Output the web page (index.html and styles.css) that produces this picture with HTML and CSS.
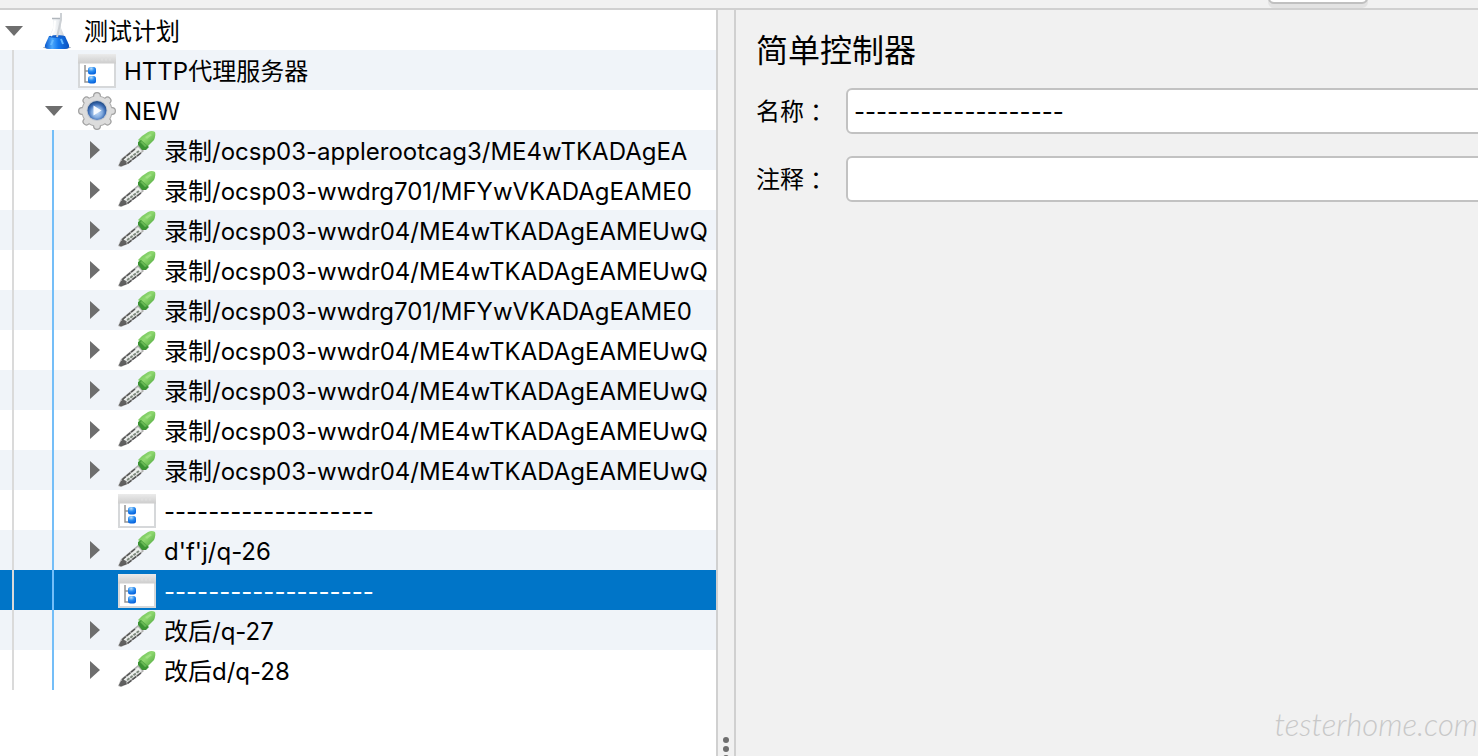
FILE: index.html
```html
<!DOCTYPE html>
<html lang="zh-CN">
<head>
  <meta charset="UTF-8">
  <title>测试计划</title>
  <link rel="stylesheet" href="styles.css">
</head>
<body>
  <!-- Icon sprite -->
  <svg class="sprite" aria-hidden="true">
    <defs>
      <linearGradient id="liquid" x1="0" x2="1" y1="0" y2="0">
        <stop offset="0" stop-color="#0a58cc"/>
        <stop offset=".3" stop-color="#4ca8fc"/>
        <stop offset=".55" stop-color="#1478ee"/>
        <stop offset="1" stop-color="#0a50bc"/>
      </linearGradient>
      <linearGradient id="glass" x1="0" x2="1" y1="0" y2="0">
        <stop offset="0" stop-color="#ccd2d8"/>
        <stop offset=".4" stop-color="#f6f8fa"/>
        <stop offset="1" stop-color="#b4bcc4"/>
      </linearGradient>
      <linearGradient id="titlebar" x1="0" x2="0" y1="0" y2="1">
        <stop offset="0" stop-color="#ebebeb"/>
        <stop offset="1" stop-color="#cdcdcd"/>
      </linearGradient>
      <radialGradient id="node" cx=".4" cy=".2" r=".8">
        <stop offset="0" stop-color="#b8defc"/>
        <stop offset=".5" stop-color="#2a8cf0"/>
        <stop offset="1" stop-color="#0460dc"/>
      </radialGradient>
      <radialGradient id="hub" cx=".5" cy=".6" r=".55">
        <stop offset="0" stop-color="#c4dcf8"/>
        <stop offset=".5" stop-color="#84acdf"/>
        <stop offset=".8" stop-color="#3c6cb4"/>
        <stop offset="1" stop-color="#24508c"/>
      </radialGradient>
      <linearGradient id="bulb" x1="0" x2="1" y1="0" y2="1">
        <stop offset="0" stop-color="#64b850"/>
        <stop offset=".45" stop-color="#8fd870"/>
        <stop offset="1" stop-color="#46a038"/>
      </linearGradient>
      <linearGradient id="shade" x1="0" x2="1" y1="0" y2="0">
        <stop offset="0" stop-color="#888" stop-opacity=".2"/>
        <stop offset=".3" stop-color="#888" stop-opacity=".6"/>
        <stop offset="1" stop-color="#888" stop-opacity="0"/>
      </linearGradient>
    </defs>

    <symbol id="icon-flask" viewBox="0 0 38 40">
      <ellipse cx="19" cy="37.500" rx="14" ry="1.500" fill="#7c8898" opacity=".7"/>
      <path d="M15 8h8v10l7 17q0 3-3 3H11q-3 0-3-3l7-17z" fill="url(#glass)" opacity=".85"/>
      <path d="M11 26h16l4 9q1 4-4 4H11q-5 0-4-4z" fill="url(#liquid)"/>
      <ellipse cx="19" cy="26.500" rx="8" ry="1.500" fill="#1460cc"/>
      <path d="M14 8.500h10" stroke="#b0b6bc" stroke-width="1.500"/>
      <path d="M23 3v7l-4 17" stroke="#ccd0d4" stroke-width="2" fill="none"/>
      <path d="M17 11l-1 9-3 6" stroke="#fff" stroke-width="2" fill="none"/>
      <path d="M15 30l-2 5M23 29l2 5" stroke="#64b8ff" stroke-width="2" fill="none"/>
    </symbol>

    <symbol id="icon-window" viewBox="0 0 38 40">
      <path d="M0 4h38v34H0z" fill="#d6d8da"/>
      <path d="M2 12h34v24H2z" fill="#fff"/>
      <path d="M0 4h38v9.500H0z" fill="url(#titlebar)"/>
      <path d="M23 9h2m2 0h2m2 0h2" stroke="#dedede" stroke-width="3"/>
      <path d="M7 15v17h4M7 21h4" stroke="#949494" stroke-width="1.500" fill="none"/>
      <rect x="10" y="17" width="8" height="7.500" rx="2.500" fill="url(#node)"/>
      <rect x="10" y="26" width="8" height="7.500" rx="2.500" fill="url(#node)"/>
    </symbol>

    <symbol id="icon-gear" viewBox="0 0 38 40">
      <g stroke-linecap="round">
        <path d="M19 6v30M4 21h30M8.500 10.500l21 21M29.500 10.500l-21 21" stroke="#a0a0a0" stroke-width="8"/>
        <circle cx="19" cy="21" r="15.500" fill="#acacac"/>
        <path d="M19 6v30M4 21h30M8.500 10.500l21 21M29.500 10.500l-21 21" stroke="#dcdcdc" stroke-width="5.500"/>
        <circle cx="19" cy="21" r="14.500" fill="#dcdcdc"/>
      </g>
      <circle cx="19" cy="20.500" r="10.500" fill="#c0c6d0"/>
      <circle cx="19" cy="20.500" r="9.500" fill="url(#hub)"/>
      <path d="M15.500 15.500l8 5-8 5z" fill="#f6faff"/>
    </symbol>

    <symbol id="icon-dropper" viewBox="0 0 38 40">
      <path d="M3 39h30" stroke="url(#shade)" stroke-width="2"/>
      <path d="M20 15l6 6-16 13-7 3-3-1 3-7z" fill="#b0b0b0"/>
      <path d="M20 17l4 4L8 33l-4 1 1-4z" fill="#eceeec"/>
      <path d="M21 21L8 31" stroke="#7c887c" stroke-width="2" stroke-dasharray="3 1"/>
      <path d="M17 19L5 29l-3 6M23 23L10 33l-6 2" stroke="#545454" stroke-width="1.500" fill="none" stroke-dasharray="5 1"/>
      <path d="M5 29l-4 6q1 2 3 1l5-4z" fill="#606060"/>
      <path d="M24 6l6-4q4-2 7 0 1 3-1 8l-7 7-9-7z" fill="url(#bulb)"/>
      <path d="M20 12l3-2 8 7-3 3q-2 0-4 0l-4-5z" fill="#3c9434"/>
      <path d="M22 12l2-1 5 5-2 1z" fill="#68b854"/>
      <path d="M27 7l5-3 2 1-5 4z" fill="#a8e48c" opacity=".7"/>
    </symbol>
  </svg>

  <div class="toolbar">
    <button type="button" class="toolbar-button" aria-label="工具"></button>
  </div>

  <div class="workspace">
    <nav class="tree" aria-label="测试计划">
      <div class="row">
        <button type="button" class="toggle open" aria-label="折叠"></button>
        <svg class="icon"><use href="#icon-flask"/></svg>
        <span class="label">测试计划</span>
      </div>
      <div class="row">
        <span class="guide"></span>
        <span class="toggle"></span>
        <svg class="icon"><use href="#icon-window"/></svg>
        <span class="label">HTTP代理服务器</span>
      </div>
      <div class="row">
        <span class="guide"></span>
        <button type="button" class="toggle open" aria-label="折叠"></button>
        <svg class="icon"><use href="#icon-gear"/></svg>
        <span class="label">NEW</span>
      </div>
      <div class="row">
        <span class="guide"></span>
        <span class="guide active"></span>
        <button type="button" class="toggle closed" aria-label="展开"></button>
        <svg class="icon"><use href="#icon-dropper"/></svg>
        <span class="label">录制/ocsp03-applerootcag3/ME4wTKADAgEA</span>
      </div>
      <div class="row">
        <span class="guide"></span>
        <span class="guide active"></span>
        <button type="button" class="toggle closed" aria-label="展开"></button>
        <svg class="icon"><use href="#icon-dropper"/></svg>
        <span class="label">录制/ocsp03-wwdrg701/MFYwVKADAgEAME0</span>
      </div>
      <div class="row">
        <span class="guide"></span>
        <span class="guide active"></span>
        <button type="button" class="toggle closed" aria-label="展开"></button>
        <svg class="icon"><use href="#icon-dropper"/></svg>
        <span class="label">录制/ocsp03-wwdr04/ME4wTKADAgEAMEUwQ</span>
      </div>
      <div class="row">
        <span class="guide"></span>
        <span class="guide active"></span>
        <button type="button" class="toggle closed" aria-label="展开"></button>
        <svg class="icon"><use href="#icon-dropper"/></svg>
        <span class="label">录制/ocsp03-wwdr04/ME4wTKADAgEAMEUwQ</span>
      </div>
      <div class="row">
        <span class="guide"></span>
        <span class="guide active"></span>
        <button type="button" class="toggle closed" aria-label="展开"></button>
        <svg class="icon"><use href="#icon-dropper"/></svg>
        <span class="label">录制/ocsp03-wwdrg701/MFYwVKADAgEAME0</span>
      </div>
      <div class="row">
        <span class="guide"></span>
        <span class="guide active"></span>
        <button type="button" class="toggle closed" aria-label="展开"></button>
        <svg class="icon"><use href="#icon-dropper"/></svg>
        <span class="label">录制/ocsp03-wwdr04/ME4wTKADAgEAMEUwQ</span>
      </div>
      <div class="row">
        <span class="guide"></span>
        <span class="guide active"></span>
        <button type="button" class="toggle closed" aria-label="展开"></button>
        <svg class="icon"><use href="#icon-dropper"/></svg>
        <span class="label">录制/ocsp03-wwdr04/ME4wTKADAgEAMEUwQ</span>
      </div>
      <div class="row">
        <span class="guide"></span>
        <span class="guide active"></span>
        <button type="button" class="toggle closed" aria-label="展开"></button>
        <svg class="icon"><use href="#icon-dropper"/></svg>
        <span class="label">录制/ocsp03-wwdr04/ME4wTKADAgEAMEUwQ</span>
      </div>
      <div class="row">
        <span class="guide"></span>
        <span class="guide active"></span>
        <button type="button" class="toggle closed" aria-label="展开"></button>
        <svg class="icon"><use href="#icon-dropper"/></svg>
        <span class="label">录制/ocsp03-wwdr04/ME4wTKADAgEAMEUwQ</span>
      </div>
      <div class="row">
        <span class="guide"></span>
        <span class="guide active"></span>
        <span class="toggle"></span>
        <svg class="icon"><use href="#icon-window"/></svg>
        <span class="label">-------------------</span>
      </div>
      <div class="row">
        <span class="guide"></span>
        <span class="guide active"></span>
        <button type="button" class="toggle closed" aria-label="展开"></button>
        <svg class="icon"><use href="#icon-dropper"/></svg>
        <span class="label">d'f'j/q-26</span>
      </div>
      <div class="row selected">
        <span class="guide"></span>
        <span class="guide active"></span>
        <span class="toggle"></span>
        <svg class="icon"><use href="#icon-window"/></svg>
        <span class="label">-------------------</span>
      </div>
      <div class="row">
        <span class="guide"></span>
        <span class="guide active"></span>
        <button type="button" class="toggle closed" aria-label="展开"></button>
        <svg class="icon"><use href="#icon-dropper"/></svg>
        <span class="label">改后/q-27</span>
      </div>
      <div class="row">
        <span class="guide"></span>
        <span class="guide active"></span>
        <button type="button" class="toggle closed" aria-label="展开"></button>
        <svg class="icon"><use href="#icon-dropper"/></svg>
        <span class="label">改后d/q-28</span>
      </div>
    </nav>

    <div class="splitter">
      <span class="dot"></span>
      <span class="dot"></span>
      <span class="dot"></span>
    </div>

    <main class="editor">
      <h1>简单控制器</h1>
      <form class="fields">
        <label for="name">名称<span class="colon">：</span></label>
        <input type="text" id="name" value="-------------------">
        <label for="comment">注释<span class="colon">：</span></label>
        <input type="text" id="comment">
      </form>
      <div class="watermark">testerhome.com</div>
    </main>
  </div>
</body>
</html>
```
FILE: styles.css
```css
* {
  box-sizing: border-box;
}
body {
  display: flex;
  flex-direction: column;
  height: 100vh;
  margin: 0;
  overflow: hidden;
  background: #f1f1f1;
  color: #000;
  font-family: Inter, "Noto Sans CJK SC", sans-serif;
  font-size: 24px;
}
.sprite {
  position: absolute;
  width: 0;
  height: 0;
}

/* Toolbar */
.toolbar {
  display: flex;
  flex: none;
  justify-content: flex-end;
  align-items: flex-end;
  height: 10px;
  padding: 0 110px 4px 0;
  border-bottom: 2px solid #d0d0d0;
  overflow: hidden;
}
.toolbar-button {
  flex: none;
  width: 100px;
  height: 40px;
  border: 2px solid #c0c0c0;
  border-radius: 6px;
  background: #fff;
  box-shadow: 0 4px 0 #e3e3e3;
}
.workspace {
  display: grid;
  grid-template-columns: 716fr 20px 742fr;
  flex: 1;
  min-height: 0;
}

/* Tree */
.tree {
  min-width: 0;
  background: #fff;
  overflow: hidden;
}
.row {
  display: flex;
  align-items: center;
  height: 40px;
}
.row:nth-child(even) {
  background: #f0f4f9;
}
.row.selected {
  background: #0075c8;
  color: #fff;
}
.guide {
  flex: none;
  align-self: stretch;
  width: 28px;
  margin-left: 12px;
  border-left: 2px solid #dadada;
}
.guide.active {
  border-color: #74bef8;
}
.toggle {
  display: flex;
  flex: none;
  justify-content: center;
  align-items: center;
  width: 28px;
  height: 40px;
  margin-right: 10px;
  padding: 0;
  border: none;
  background: none;
}
.toggle.open {
  padding-top: 2px;
}
.toggle.open::before {
  content: "";
  border: 9px solid transparent;
  border-top: 10px solid #6e6e6e;
  border-bottom: none;
}
.toggle.closed {
  padding-left: 2px;
}
.toggle.closed::before {
  content: "";
  border: 9px solid transparent;
  border-left: 10px solid #6e6e6e;
  border-right: none;
}
.icon {
  flex: none;
  width: 38px;
  height: 40px;
  margin-right: 8px;
}
.label {
  padding-top: 4px;
  line-height: 36px;
  white-space: nowrap;
}

/* Splitter */
.splitter {
  display: flex;
  flex-direction: column;
  justify-content: flex-end;
  align-items: center;
  gap: 3px;
  min-height: 0;
  margin-bottom: -5px;
  border: solid #d0d0d0;
  border-width: 0 2px;
  cursor: col-resize;
}
.dot {
  flex: none;
  width: 6px;
  height: 6px;
  border-radius: 50%;
  background: #6e6e6e;
}

/* Editor */
.editor {
  display: flex;
  flex-direction: column;
  min-width: 0;
  padding: 20px 0 12px 20px;
  overflow: hidden;
}
h1 {
  margin: 0 0 16px;
  font-size: 32px;
  font-weight: 400;
  line-height: 42px;
}
.fields {
  display: grid;
  grid-template-columns: 90px 1fr;
  align-items: center;
  row-gap: 22px;
  margin-right: -10px;
}
.fields label {
  padding-top: 2px;
  line-height: 32px;
  white-space: nowrap;
}
.colon {
  margin-left: 6px;
}
input[type="text"] {
  width: 100%;
  height: 46px;
  padding: 0 6px;
  border: 2px solid #c2c2c2;
  border-radius: 6px;
  background: #fff;
  color: #000;
  font: inherit;
}
.watermark {
  align-self: flex-end;
  margin-top: auto;
  color: #c8c8c8;
  font-family: Lato, sans-serif;
  font-size: 31px;
  font-style: italic;
  font-weight: 300;
  line-height: 40px;
}
```
